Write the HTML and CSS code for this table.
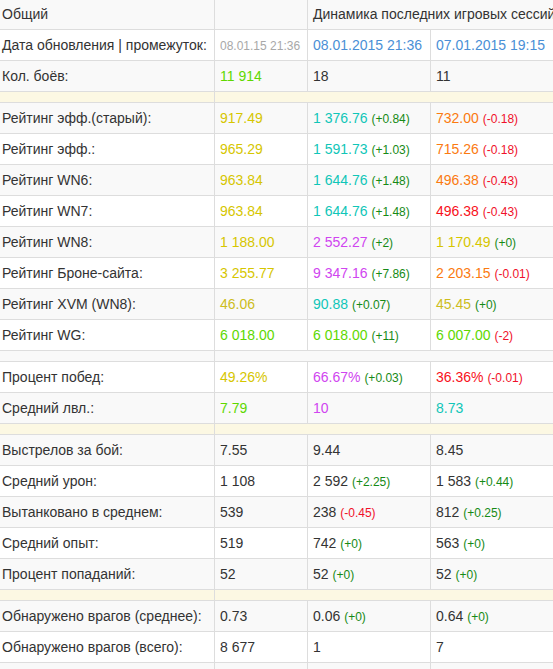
FILE: index.html
```html
<!DOCTYPE html>
<html lang="ru">
<head>
    <meta charset="UTF-8">
    <meta name="viewport" content="width=device-width, initial-scale=1.0">
    <title>Статистика игрока</title>
    <link rel="stylesheet" href="styles.css">
</head>
<body>
    <table class="stats">
        <colgroup>
            <col class="col-label">
            <col class="col-total">
            <col class="col-session">
            <col class="col-session-wide">
        </colgroup>
        <tbody>
            <tr class="info">
                <td>Общий</td>
                <td></td>
                <td colspan="2">Динамика последних игровых сессий</td>
            </tr>
            <tr>
                <td>Дата обновления | промежуток:</td>
                <td><span class="muted">08.01.15 21:36</span></td>
                <td class="date">08.01.2015 21:36</td>
                <td class="date">07.01.2015 19:15</td>
            </tr>
            <tr>
                <td>Кол. боёв:</td>
                <td class="c-lime">11 914</td>
                <td>18</td>
                <td>11</td>
            </tr>
            <tr class="gap"><td></td><td colspan="3"></td></tr>

            <tr>
                <td>Рейтинг эфф.(старый):</td>
                <td class="c-yellow">917.49</td>
                <td><span class="c-teal">1 376.76</span> <span class="d-up">(+0.84)</span></td>
                <td><span class="c-orange">732.00</span> <span class="d-down">(-0.18)</span></td>
            </tr>
            <tr>
                <td>Рейтинг эфф.:</td>
                <td class="c-yellow">965.29</td>
                <td><span class="c-teal">1 591.73</span> <span class="d-up">(+1.03)</span></td>
                <td><span class="c-orange">715.26</span> <span class="d-down">(-0.18)</span></td>
            </tr>
            <tr>
                <td>Рейтинг WN6:</td>
                <td class="c-yellow">963.84</td>
                <td><span class="c-teal">1 644.76</span> <span class="d-up">(+1.48)</span></td>
                <td><span class="c-orange">496.38</span> <span class="d-down">(-0.43)</span></td>
            </tr>
            <tr>
                <td>Рейтинг WN7:</td>
                <td class="c-yellow">963.84</td>
                <td><span class="c-teal">1 644.76</span> <span class="d-up">(+1.48)</span></td>
                <td><span class="c-red">496.38</span> <span class="d-down">(-0.43)</span></td>
            </tr>
            <tr>
                <td>Рейтинг WN8:</td>
                <td class="c-yellow">1 188.00</td>
                <td><span class="c-purple">2 552.27</span> <span class="d-up">(+2)</span></td>
                <td><span class="c-yellow">1 170.49</span> <span class="d-up">(+0)</span></td>
            </tr>
            <tr>
                <td>Рейтинг Броне-сайта:</td>
                <td class="c-yellow">3 255.77</td>
                <td><span class="c-purple">9 347.16</span> <span class="d-up">(+7.86)</span></td>
                <td><span class="c-orange">2 203.15</span> <span class="d-down">(-0.01)</span></td>
            </tr>
            <tr>
                <td>Рейтинг XVM (WN8):</td>
                <td class="c-olive">46.06</td>
                <td><span class="c-teal">90.88</span> <span class="d-up">(+0.07)</span></td>
                <td><span class="c-olive">45.45</span> <span class="d-up">(+0)</span></td>
            </tr>
            <tr>
                <td>Рейтинг WG:</td>
                <td class="c-lime">6 018.00</td>
                <td><span class="c-lime">6 018.00</span> <span class="d-up">(+11)</span></td>
                <td><span class="c-lime">6 007.00</span> <span class="d-down">(-2)</span></td>
            </tr>
            <tr class="gap"><td></td><td colspan="3"></td></tr>

            <tr>
                <td>Процент побед:</td>
                <td class="c-yellow">49.26%</td>
                <td><span class="c-purple">66.67%</span> <span class="d-up">(+0.03)</span></td>
                <td><span class="c-red">36.36%</span> <span class="d-down">(-0.01)</span></td>
            </tr>
            <tr>
                <td>Средний лвл.:</td>
                <td class="c-lime">7.79</td>
                <td class="c-purple">10</td>
                <td class="c-teal">8.73</td>
            </tr>
            <tr class="gap"><td></td><td colspan="3"></td></tr>

            <tr>
                <td>Выстрелов за бой:</td>
                <td>7.55</td>
                <td>9.44</td>
                <td>8.45</td>
            </tr>
            <tr>
                <td>Средний урон:</td>
                <td>1 108</td>
                <td>2 592 <span class="d-up">(+2.25)</span></td>
                <td>1 583 <span class="d-up">(+0.44)</span></td>
            </tr>
            <tr>
                <td>Вытанковано в среднем:</td>
                <td>539</td>
                <td>238 <span class="d-down">(-0.45)</span></td>
                <td>812 <span class="d-up">(+0.25)</span></td>
            </tr>
            <tr>
                <td>Средний опыт:</td>
                <td>519</td>
                <td>742 <span class="d-up">(+0)</span></td>
                <td>563 <span class="d-up">(+0)</span></td>
            </tr>
            <tr>
                <td>Процент попаданий:</td>
                <td>52</td>
                <td>52 <span class="d-up">(+0)</span></td>
                <td>52 <span class="d-up">(+0)</span></td>
            </tr>
            <tr class="gap"><td></td><td colspan="3"></td></tr>

            <tr>
                <td>Обнаружено врагов (среднее):</td>
                <td>0.73</td>
                <td>0.06 <span class="d-up">(+0)</span></td>
                <td>0.64 <span class="d-up">(+0)</span></td>
            </tr>
            <tr>
                <td>Обнаружено врагов (всего):</td>
                <td>8 677</td>
                <td>1</td>
                <td>7</td>
            </tr>
            <tr class="last">
                <td></td>
                <td></td>
                <td></td>
                <td></td>
            </tr>
        </tbody>
    </table>
</body>
</html>
```

FILE: styles.css
```css
html {
    overflow: hidden;
}

body {
    margin: 0;
    padding: 0;
    font-family: 'Liberation Sans', Arial, sans-serif;
    font-size: 14px;
    line-height: 20px;
    color: #333;
    background-color: #fff;
}

.stats {
    table-layout: fixed;
    border-collapse: collapse;
    width: 584px;
    margin: -2px 0 0 -4px;
    border: 1px solid #ddd;
}

.col-label { width: 218px; }
.col-total { width: 93px; }
.col-session { width: 123px; }
.col-session-wide { width: 150px; }

.stats td {
    padding: 5px;
    border: 1px solid #ddd;
    white-space: nowrap;
    overflow: hidden;
    vertical-align: top;
}

.stats tr.last td {
    height: 20px;
}

/* striping, like bootstrap's table-striped */
.stats tbody tr:nth-of-type(odd) td {
    background-color: #f9f9f9;
}

.stats tr.info td {
    background-color: #d9edf7;
}

.stats tr.gap td {
    background-color: #fcf8e3;
}

.muted {
    font-size: 12px;
    line-height: 1;
    color: #a8a8a8;
}

.date {
    color: #4a8fd6;
}

.c-yellow { color: #d6c600; }
.c-olive { color: #cdbd1c; }
.c-lime { color: #5ed800; }
.c-teal { color: #10c6b8; }
.c-purple { color: #d045f0; }
.c-orange { color: #fb7a10; }
.c-red { color: #f8101a; }

.d-up,
.d-down {
    font-size: 12px;
    line-height: 1;
}

.d-up { color: #168a16; }
.d-down { color: #f0102a; }
```
